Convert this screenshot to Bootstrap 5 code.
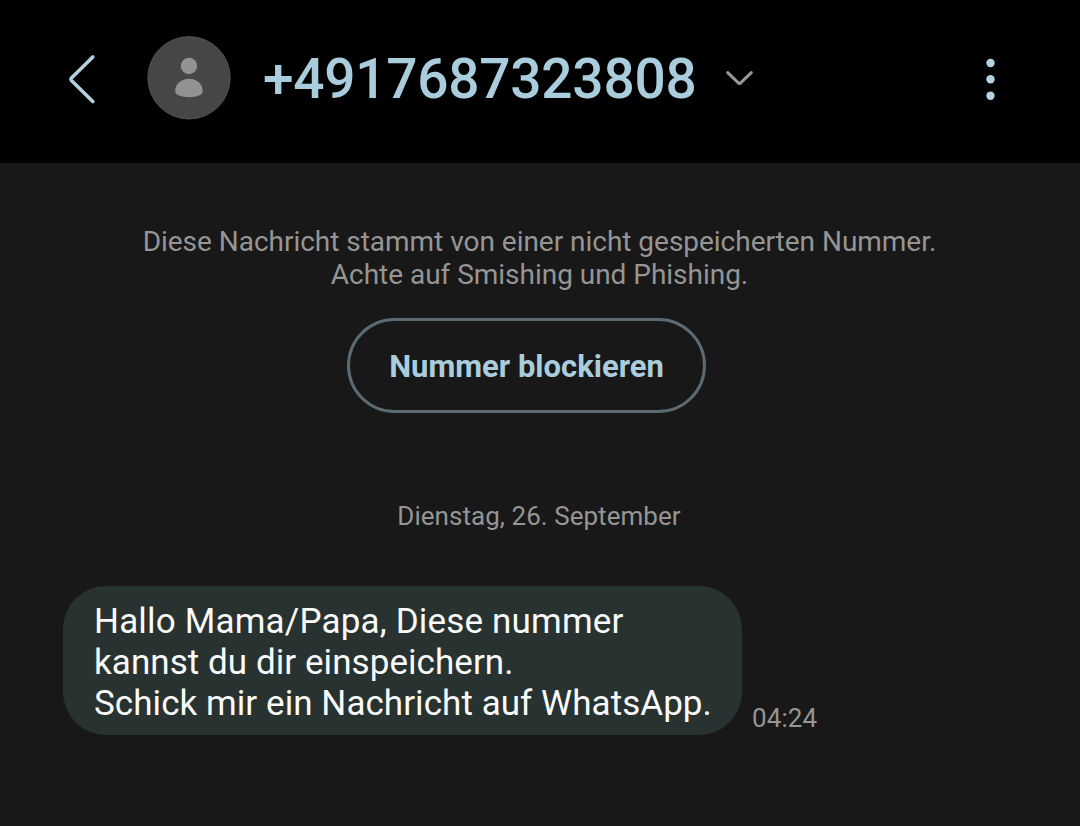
<!DOCTYPE html>
<html lang="de" data-bs-theme="dark">
<head>
<meta charset="utf-8">
<meta name="viewport" content="width=device-width, initial-scale=1">
<title>Nachrichten</title>
<link href="https://cdn.jsdelivr.net/npm/bootstrap@5.3.0/dist/css/bootstrap.min.css" rel="stylesheet">
<style>
  body { background: #181818; font-family: Roboto, sans-serif; color: #959595; min-height: 100vh; overflow: hidden; }
  .topbar { background: #000; height: 163px; padding: 36px 80px 0 67px; }
  .topbar-row { height: 84px; }
  .back { margin-right: 49px; }
  .avatar { margin-right: 32px; }
  .number { font-size: 55px; line-height: 64px; font-weight: 500; color: #a9cddd; padding-top: 1px; letter-spacing: -.25px; }
  .chevron { margin-left: 29px; }
  .notice { font-size: 28px; line-height: 33px; margin-top: 62px; letter-spacing: -.025px; padding-right: 1px; }
  .block-btn { --bs-btn-color: #a9cddd; --bs-btn-border-color: #5c6b73; --bs-btn-hover-color: #a9cddd; --bs-btn-hover-border-color: #a9cddd;
    width: 359px; height: 95px; margin: 27px 0 0 347px; border-width: 3px; font-size: 31px; line-height: 36px; font-weight: 700; padding: 2px 0 0; }
  .day { font-size: 26px; line-height: 30px; margin-top: 88px; letter-spacing: .04px; padding-right: 2px; }
  .message { margin: 55px 0 0 63px; }
  .bubble { width: 679px; height: 149px; padding: 15px 0 11px 31px; border-radius: 43px; background: #273231; color: #fafafa; font-size: 35px; line-height: 41px; letter-spacing: .06px; }
  .greeting { letter-spacing: .18px; }
  .time { font-size: 26px; line-height: 30px; margin: 0 0 2px 10px; letter-spacing: .1px; }
</style>
</head>
<body>
<header class="topbar">
  <div class="topbar-row d-flex align-items-center">
    <svg class="back flex-shrink-0" width="31" height="84" viewBox="67 36 31 84" fill="none" stroke="#b4d0dc" stroke-width="3.6" stroke-linecap="round" stroke-linejoin="round" role="img" aria-label="Zurück"><path d="M92.8 57 71.2 78.2Q70.4 79.3 71.2 80.2L92.8 101.5"/></svg>
    <svg class="avatar flex-shrink-0" width="84" height="84" viewBox="147 36 84 84" aria-hidden="true"><circle cx="189" cy="77.8" r="41.2" fill="#464646" stroke="#525252" stroke-width="1"/><circle cx="189" cy="66" r="8.2" fill="#929292"/><path d="M175.300 92C174.500 84.500 181 78.700 189 78.700S203.500 84.500 202.700 92C202.500 95 196 97.200 189 97.200S175.500 95 175.300 92Z" fill="#929292"/></svg>
    <div class="number text-nowrap">+4917687323808</div>
    <svg class="chevron flex-shrink-0" width="30" height="84" viewBox="725 36 30 84" fill="none" stroke="#989898" stroke-width="3" stroke-linecap="round" stroke-linejoin="round" aria-hidden="true"><path d="M727.700 72.600 738.900 83.300Q739.500 83.800 740.100 83.300L751.300 72.600"/></svg>
    <svg class="ms-auto flex-shrink-0" width="20" height="84" viewBox="980 36 20 84" fill="#b4d3df" role="img" aria-label="Mehr"><circle cx="990.5" cy="63" r="4.2"/><circle cx="990.5" cy="79.3" r="4.2"/><circle cx="990.5" cy="95.7" r="4.2"/></svg>
  </div>
</header>
<main>
  <p class="notice text-center mb-0">Diese Nachricht stammt von einer nicht gespeicherten Nummer.<br>Achte auf Smishing und Phishing.</p>
  <button type="button" class="block-btn btn rounded-pill d-block">Nummer blockieren</button>
  <div class="day text-center">Dienstag, 26. September</div>
  <div class="message d-flex align-items-end">
    <div class="bubble text-nowrap"><span class="greeting">Hallo Mama/Papa, Diese nummer</span><br>kannst du dir einspeichern.<br>Schick mir ein Nachricht auf WhatsApp.</div>
    <div class="time">04:24</div>
  </div>
</main>
<script src="https://cdn.jsdelivr.net/npm/bootstrap@5.3.0/dist/js/bootstrap.bundle.min.js"></script>
</body>
</html>
